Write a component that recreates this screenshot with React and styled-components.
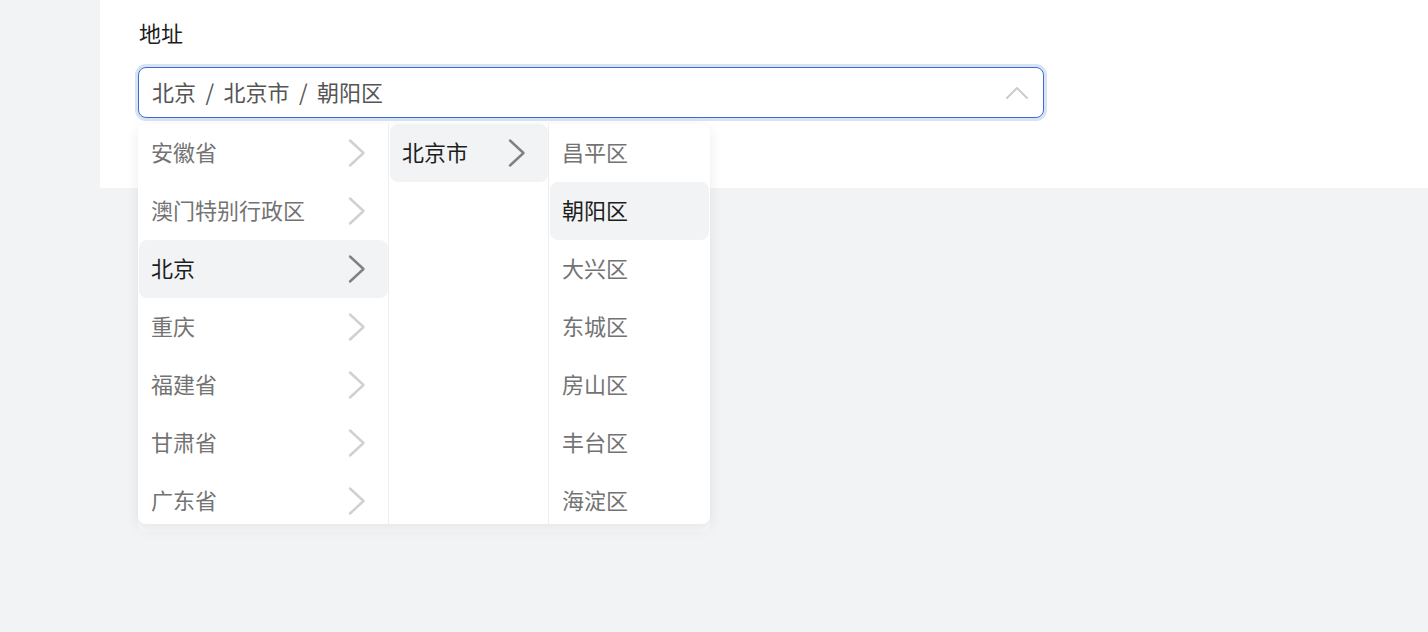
import React, { useState } from "react";
import styled, { createGlobalStyle } from "styled-components";

const Global = createGlobalStyle`
  html, body { margin: 0; padding: 0; background: #f2f3f5; }
  body { font-family: "Noto Sans CJK SC", "Noto Sans", sans-serif; }
  * { box-sizing: border-box; }
`;

const Page = styled.div`
  width: 1428px;
  height: 632px;
  background: #f2f3f5;
  padding-left: 100px;
`;

const Card = styled.div`
  background: #fff;
  height: 188px;
  padding: 17px 0 0 38px;
`;

const Label = styled.div`
  font-size: 22px;
  line-height: 30px;
  color: #1d1d1d;
  padding-left: 1px;
  margin-bottom: 20px;
`;

const Field = styled.div`
  position: relative;
  width: 906px;
`;

const Input = styled.div`
  height: 51px;
  border: 1px solid #3a6fd0;
  border-radius: 8px;
  box-shadow: 0 0 0 3px #d8e3f6;
  display: flex;
  align-items: center;
  justify-content: space-between;
  padding: 0 14px 4px 13px;
  font-size: 22px;
  color: #555;
  background: #fff;
`;

const Sep = styled.span`
  margin: 0 4.5px;
`;

const Dropdown = styled.div`
  position: absolute;
  top: 57px;
  left: 0;
  width: 572px;
  height: 400px;
  background: #fff;
  border-radius: 8px;
  overflow: hidden;
  display: flex;
  z-index: 2;
  box-shadow: 0 4px 14px rgba(0, 0, 0, 0.08), 0 8px 0 rgba(255, 255, 255, 0.45);
`;

const Column = styled.div`
  width: ${(p) => p.$w}px;
  border-right: ${(p) => (p.$last ? "none" : "1px solid #eeeeee")};
  display: flex;
  flex-direction: column;
  flex-shrink: 0;
`;

const Item = styled.div`
  height: 58px;
  flex-shrink: 0;
  margin: 0 ${(p) => (p.$last ? 1 : 0)}px 0 1px;
  display: flex;
  align-items: center;
  justify-content: space-between;
  padding: 0 21px 4px 12px;
  border-radius: 8px;
  font-size: 22px;
  color: ${(p) => (p.$active ? "#1d1d1d" : "#737373")};
  background: ${(p) => (p.$active ? "#f2f3f5" : "transparent")};
`;

const ChevronBox = styled.span`
  display: flex;
  margin-top: 4px;
`;

const Chevron = ({ active }) => (
  <ChevronBox>
    <svg width="20" height="30" viewBox="0 0 20 30" fill="none">
      <path
        d="M3 2.5 L16.5 15 L3 27.5"
        stroke={active ? "#808080" : "#d0d0d0"}
        strokeWidth="2.4"
        strokeLinecap="round"
        strokeLinejoin="round"
      />
    </svg>
  </ChevronBox>
);

const UpArrow = () => (
  <ChevronBox>
    <svg width="24" height="14" viewBox="0 0 24 14" fill="none">
      <path d="M2 12 L12 2 L22 12" stroke="#cccccc" strokeWidth="2" strokeLinecap="round" strokeLinejoin="round" />
    </svg>
  </ChevronBox>
);

const provinces = ["安徽省", "澳门特别行政区", "北京", "重庆", "福建省", "甘肃省", "广东省"];
const cities = ["北京市"];
const districts = ["昌平区", "朝阳区", "大兴区", "东城区", "房山区", "丰台区", "海淀区"];

export default function App() {
  const [p] = useState("北京");
  const [c] = useState("北京市");
  const [d] = useState("朝阳区");
  return (
    <Page>
      <Global />
      <Card>
        <Label>地址</Label>
        <Field>
          <Input>
            <span>
              {p} <Sep>/</Sep> {c} <Sep>/</Sep> {d}
            </span>
            <UpArrow />
          </Input>
          <Dropdown>
            <Column $w={251}>
              {provinces.map((x) => (
                <Item key={x} $active={x === p}>
                  {x}
                  <Chevron active={x === p} />
                </Item>
              ))}
            </Column>
            <Column $w={160}>
              {cities.map((x) => (
                <Item key={x} $active={x === c}>
                  {x}
                  <Chevron active={x === c} />
                </Item>
              ))}
            </Column>
            <Column $w={161} $last>
              {districts.map((x) => (
                <Item key={x} $active={x === d} $last>
                  {x}
                </Item>
              ))}
            </Column>
          </Dropdown>
        </Field>
      </Card>
    </Page>
  );
}
